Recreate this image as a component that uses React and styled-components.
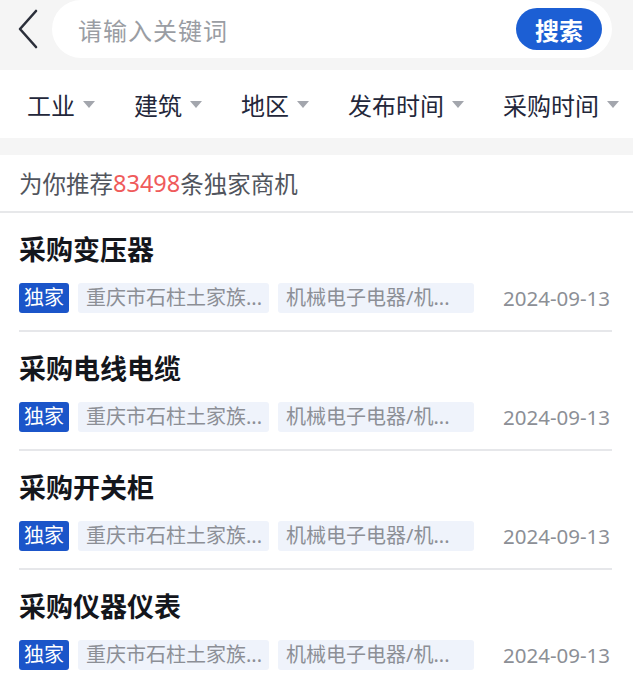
import React from "react";
import styled, { createGlobalStyle } from "styled-components";

const Global = createGlobalStyle`
  html, body { margin: 0; padding: 0; background: #ffffff; }
  body { font-family: "Noto Sans", "Noto Sans CJK SC", sans-serif; -webkit-font-smoothing: antialiased; }
  * { box-sizing: border-box; }
`;

const Page = styled.div`
  width: 633px;
  min-height: 686px;
  background: #ffffff;
  overflow: hidden;
`;

const Header = styled.div`
  display: flex;
  align-items: flex-start;
  height: 70px;
  padding: 0 21px 0 16px;
  background: #f5f5f5;
`;

const BackButton = styled.div`
  width: 24px;
  height: 58px;
  display: flex;
  align-items: center;
  justify-content: center;
  margin-right: 12px;
  color: #2b2f3a;
`;

const SearchPill = styled.div`
  flex: 1;
  height: 58px;
  display: flex;
  align-items: center;
  padding: 0 10px 0 26px;
  background: #ffffff;
  border-radius: 29px;
`;

const Placeholder = styled.span`
  flex: 1;
  font-size: 24px;
  color: #9a9da3;
  letter-spacing: 1px;
`;

const SearchButton = styled.div`
  width: 86px;
  height: 42px;
  border-radius: 21px;
  background: #1c5fd4;
  color: #ffffff;
  font-size: 24px;
  font-weight: 700;
  display: flex;
  align-items: center;
  justify-content: center;
`;

const FilterBar = styled.div`
  display: flex;
  align-items: center;
  height: 68px;
  padding: 0 0 0 27px;
  gap: 39px;
  background: #ffffff;
`;

const FilterItem = styled.div`
  display: flex;
  align-items: center;
  font-size: 24px;
  color: #23273a;
  white-space: nowrap;
`;

const Caret = styled.span`
  width: 0;
  height: 0;
  margin-left: 8px;
  border-left: 6.5px solid transparent;
  border-right: 6.5px solid transparent;
  border-top: 7px solid #a3a6ad;
`;

const Band = styled.div`
  height: 17px;
  background: #f5f5f5;
`;

const Recommend = styled.div`
  height: 58px;
  display: flex;
  align-items: center;
  padding: 0 19px;
  font-size: 23.5px;
  color: #51555d;
  border-bottom: 2px solid #e7e8ea;
`;

const Count = styled.span`
  color: #ef5b5b;
`;

const Item = styled.div`
  margin: 0 21px 0 19px;
  padding: 19px 0 17px;
  border-bottom: 2px solid #e6e7ea;
`;

const Title = styled.div`
  height: 36px;
  line-height: 36px;
  font-size: 27px;
  font-weight: 700;
  color: #14161c;
`;

const TagRow = styled.div`
  display: flex;
  align-items: center;
  margin-top: 15px;
  height: 30px;
`;

const Badge = styled.span`
  height: 30px;
  line-height: 30px;
  padding: 0 5px;
  border-radius: 3px;
  background: #1b55c9;
  color: #ffffff;
  font-size: 20px;
`;

const Tag = styled.span`
  width: ${(p) => p.$w}px;
  height: 30px;
  line-height: 30px;
  margin-left: 9px;
  padding: 0 8px;
  border-radius: 3px;
  background: #eff3fb;
  color: #8c8f96;
  font-size: 20px;
  white-space: nowrap;
  overflow: hidden;
`;

const DateText = styled.span`
  margin-left: auto;
  margin-right: 2px;
  font-size: 20.5px;
  color: #8c8f96;
`;

const filters = ["工业", "建筑", "地区", "发布时间", "采购时间"];
const items = ["采购变压器", "采购电线电缆", "采购开关柜", "采购仪器仪表"];

export default function App() {
  return (
    <Page>
      <Global />
      <Header>
        <BackButton>
          <svg width="22" height="40" viewBox="0 0 22 40" fill="none">
            <polyline points="19,2 3,20 19,38" stroke="currentColor" strokeWidth="2.6" strokeLinecap="round" strokeLinejoin="round" />
          </svg>
        </BackButton>
        <SearchPill>
          <Placeholder>请输入关键词</Placeholder>
          <SearchButton>搜索</SearchButton>
        </SearchPill>
      </Header>
      <FilterBar>
        {filters.map((f) => (
          <FilterItem key={f}>
            {f}
            <Caret />
          </FilterItem>
        ))}
      </FilterBar>
      <Band />
      <Recommend>
        为你推荐<Count>83498</Count>条独家商机
      </Recommend>
      {items.map((t) => (
        <Item key={t}>
          <Title>{t}</Title>
          <TagRow>
            <Badge>独家</Badge>
            <Tag $w={191}>重庆市石柱土家族...</Tag>
            <Tag $w={196}>机械电子电器/机...</Tag>
            <DateText>2024-09-13</DateText>
          </TagRow>
        </Item>
      ))}
    </Page>
  );
}
